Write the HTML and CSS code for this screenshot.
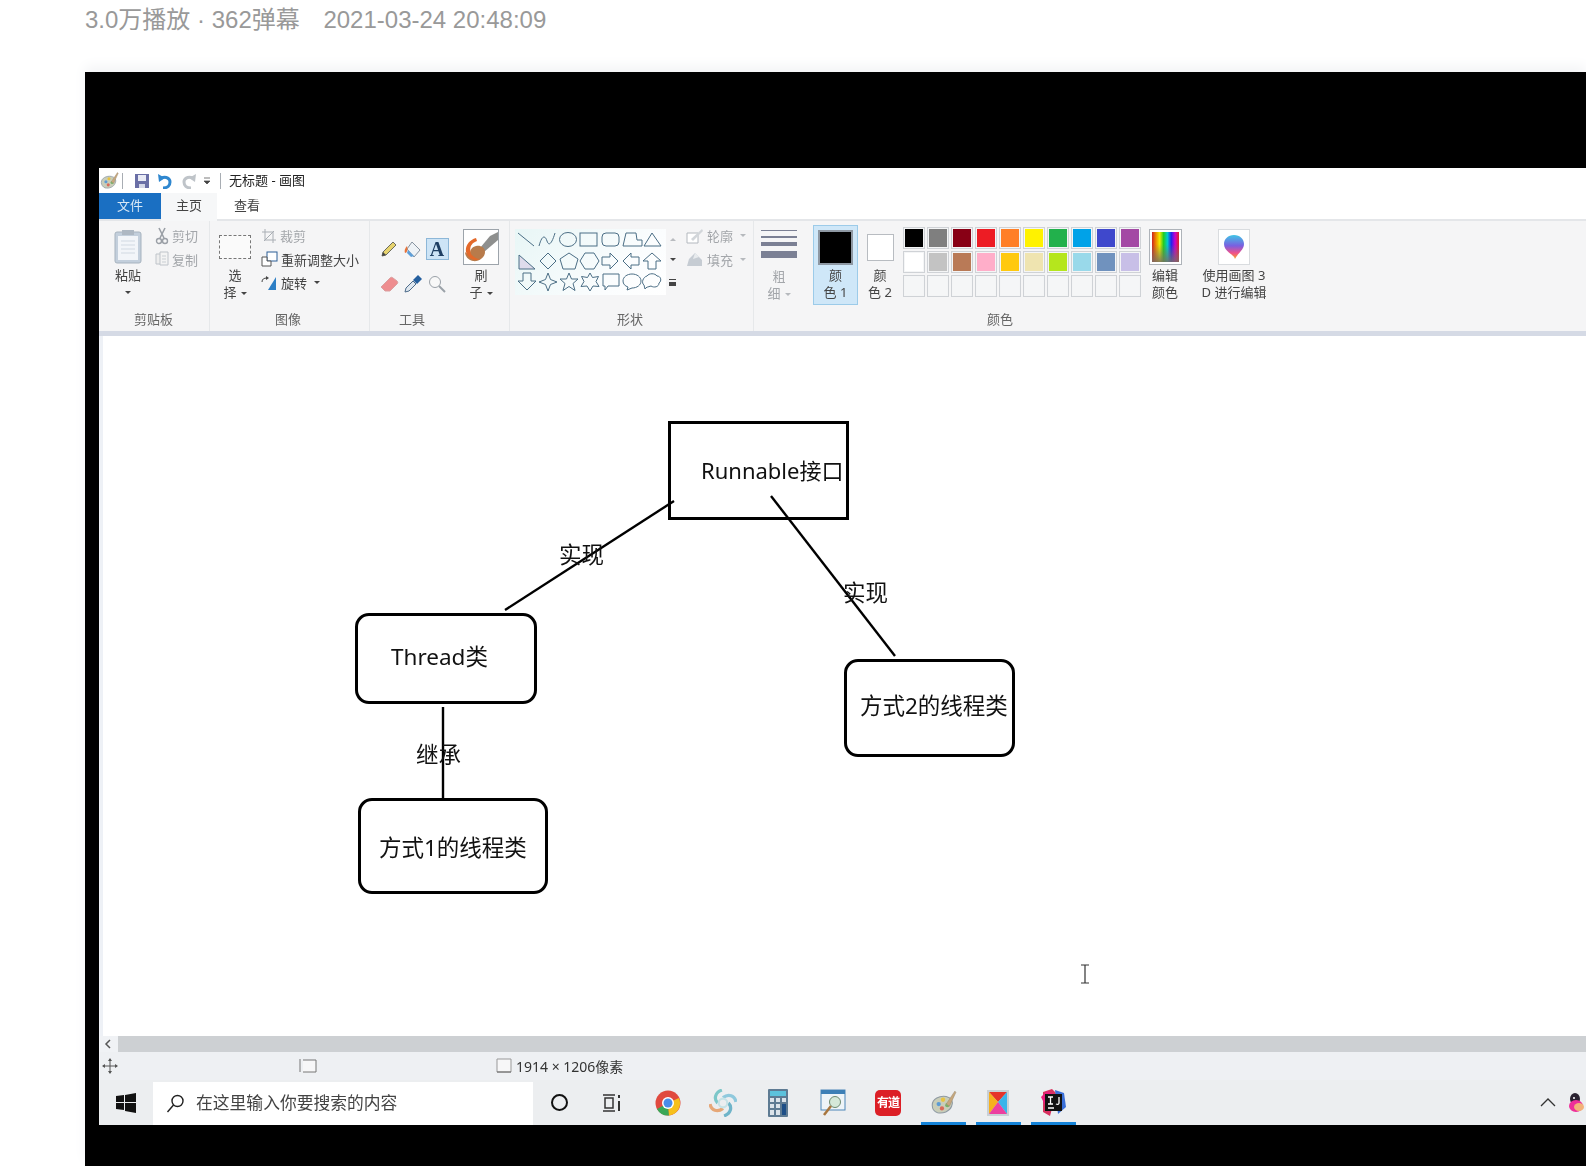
FILE: index.html
```html
<!DOCTYPE html>
<html lang="zh-CN">
<head>
    <meta charset="UTF-8">
    <title>3.0万播放 · 362弹幕</title>
    <link rel="stylesheet" href="styles.css">
</head>
<body>
    <div class="meta">3.0万播放 · 362弹幕 <span class="meta-date">2021-03-24 20:48:09</span></div>

    <div class="video">
        <div class="paint">
            <svg width="0" height="0" class="defs">
                <symbol id="palette" viewBox="0 0 26 26">
                    <path d="M3 15c0-6 7-9 13-8 5 1 7 5 5 9-2 5-8 7-13 6-3-1-5-4-5-7z" fill="#c9cdb8" stroke="#8f9aa3"/>
                    <circle cx="9" cy="14" r="2" fill="#5b9bd5"/><circle cx="13" cy="10" r="2" fill="#e8c341"/>
                    <circle cx="12" cy="18" r="2" fill="#d9695a"/><circle cx="17" cy="15" r="2" fill="#79b26a"/>
                    <path d="M16 14L24 2l1 1-6 13z" fill="#c7a77c" stroke="#9a8a70" stroke-width=".5"/>
                </symbol>
            </svg>

            <div class="titlebar">
                <svg class="qa-icon" width="20" height="20" viewBox="0 0 26 26"><use href="#palette"/></svg>
                <span class="qa-sep"></span>
                <svg class="qa-save" width="16" height="16" viewBox="0 0 16 16"><path d="M1 1h14v14H1z" fill="#6a6fa6"/><path d="M4 2h8v6H4z" fill="#e8eaf4"/><path d="M5 11h6v4H5z" fill="#d5d8e8"/></svg>
                <svg class="qa-undo" width="16" height="16" viewBox="0 0 16 16"><path d="M6 15c5 0 7-3 7-6s-3-6-9-4" fill="none" stroke="#2f87cf" stroke-width="3"/><path d="M1 1l1 8 6-4z" fill="#2f87cf"/></svg>
                <svg class="qa-redo" width="16" height="16" viewBox="0 0 16 16"><path d="M10 15c-5 0-7-3-7-6s3-6 9-4" fill="none" stroke="#bfc4c9" stroke-width="3"/><path d="M15 1l-1 8-6-4z" fill="#bfc4c9"/></svg>
                <svg class="qa-more" width="8" height="8" viewBox="0 0 8 8"><path d="M1 1h6M1 4h6L4 7z" fill="#444" stroke="#444" stroke-width=".7"/></svg>
                <span class="qa-sep qa-sep-last"></span>
                <span class="window-title">无标题 - 画图</span>
            </div>

            <div class="tabs">
                <div class="tab tab-file">文件</div>
                <div class="tab tab-active">主页</div>
                <div class="tab">查看</div>
            </div>

            <div class="ribbon">
                <div class="group group-clip">
                    <div class="group-body">
                        <div class="big-btn">
                            <svg class="big-icon" width="32" height="36" viewBox="0 0 32 36"><rect x="3" y="3" width="26" height="31" rx="2" fill="#c3cfdc" stroke="#a7b3bf"/><rect x="6" y="7" width="20" height="24" fill="#f2f5f9"/><path d="M9 12h14M9 16h14M9 20h14M9 24h14" stroke="#d1d9e2"/><rect x="10" y="1" width="12" height="5" fill="#aeb8c3"/></svg>
                            <span class="big-label">粘贴</span>
                            <span class="caret caret-row"></span>
                        </div>
                        <div class="small-col small-clip">
                            <div class="small muted">
                                <svg width="14" height="18" viewBox="0 0 14 18"><path d="M4 1l5 10M10 1L5 11" stroke="#9a9fa6" stroke-width="1.6"/><circle cx="4" cy="14" r="2.5" fill="none" stroke="#9a9fa6" stroke-width="1.4"/><circle cx="10" cy="14" r="2.5" fill="none" stroke="#9a9fa6" stroke-width="1.4"/></svg>
                                剪切
                            </div>
                            <div class="small muted">
                                <svg width="14" height="16" viewBox="0 0 14 16"><path d="M1 3h7v10H1z" fill="#eee" stroke="#bfc4ca"/><path d="M5 1h8v13H5z" fill="#f4f4f4" stroke="#bfc4ca"/><path d="M7 5h4M7 8h4M7 11h4" stroke="#c9ced3"/></svg>
                                复制
                            </div>
                        </div>
                    </div>
                    <div class="group-label label-clip">剪贴板</div>
                </div>

                <div class="group group-image">
                    <div class="group-body">
                        <div class="big-btn">
                            <span class="big-icon select-box"></span>
                            <span class="big-label">选</span>
                            <span class="big-line">择<span class="caret"></span></span>
                        </div>
                        <div class="small-col small-image">
                            <div class="small muted">
                                <svg width="16" height="16" viewBox="0 0 16 16"><path d="M4 1v11h11M1 4h11v11M3 13L13 3" fill="none" stroke="#a9aeb4"/></svg>
                                裁剪
                            </div>
                            <div class="small">
                                <svg width="17" height="16" viewBox="0 0 17 16"><rect x="6" y="1" width="10" height="9" fill="#fff" stroke="#2c5f96"/><path d="M1 6h5v4h4v5H1z" fill="#fff" stroke="#555"/></svg>
                                重新调整大小
                            </div>
                            <div class="small">
                                <svg width="17" height="16" viewBox="0 0 17 16"><path d="M7 15L15 2v13z" fill="#2d7fc5"/><path d="M1 7c0-3 2-4 5-4" fill="none" stroke="#444"/><path d="M5 1l3 2-3 2z" fill="#444"/></svg>
                                旋转<span class="caret"></span>
                            </div>
                        </div>
                    </div>
                    <div class="group-label label-image">图像</div>
                </div>

                <div class="group group-tools">
                    <div class="group-body">
                        <div class="tool-grid">
                            <svg width="18" height="18" viewBox="0 0 18 18"><path d="M2 16l1-4L13 2l3 3L6 15z" fill="#e7d36e" stroke="#6c6c5e"/><path d="M2 16l1-4 3 3z" fill="#444"/></svg>
                            <svg width="20" height="20" viewBox="0 0 20 20"><path d="M9 3l8 8-6 7-7-8z" fill="#eef2f6" stroke="#8793a0"/><path d="M5 11l6 6-3 1-4-4z" fill="#5f9fd8"/><path d="M4 7c-2 2-3 5-2 7 2 0 3-3 2-7z" fill="#e8743b"/></svg>
                            <span class="tool-active">A</span>
                            <svg width="20" height="18" viewBox="0 0 20 18"><path d="M2 12l9-9c1-1 2-1 3 0l4 3c1 1 1 2 0 3l-7 7H6z" fill="#ee8d8f" stroke="#d9a0a0"/></svg>
                            <svg width="20" height="20" viewBox="0 0 20 20"><path d="M2 18l1-4 7-7 3 3-7 7z" fill="#dfe7ef" stroke="#4d6c8b"/><path d="M10 6l5-5 4 4-5 5z" fill="#245f9e"/></svg>
                            <svg width="18" height="18" viewBox="0 0 18 18"><circle cx="7" cy="7" r="5.5" fill="#f8f8f8" stroke="#9aa1a8"/><path d="M11 11l6 6" stroke="#9aa1a8" stroke-width="2"/></svg>
                        </div>
                        <div class="big-btn brush-btn">
                            <span class="big-icon brush-box">
                                <svg width="34" height="34" viewBox="0 0 34 34"><path d="M26 6L16 18l4 4L34 10V2z" fill="#8e8f8e"/><path d="M12 16c4-1 9 1 9 6 0 6-7 10-12 9-5-1-8-5-8-9 2 2 4 2 5 1 0-3 2-6 6-7z" fill="#b87b4b"/><path d="M2 22c-1-6 3-12 10-14l1 3C7 13 5 18 7 24c2 3 6 5 9 5-6 3-12-1-14-7z" fill="#e4692a"/></svg>
                            </span>
                            <span class="big-label">刷</span>
                            <span class="big-line">子<span class="caret"></span></span>
                        </div>
                    </div>
                    <div class="group-label label-tools">工具</div>
                </div>

                <div class="group group-shapes">
                    <div class="group-body">
                        <svg class="gallery" width="151" height="66" viewBox="0 0 151 66" fill="none" stroke="#4b6e85" stroke-width="1">
                            <path d="M3 4l16 13"/>
                            <path d="M24 17c3-11 6-11 8-5s5 2 8-8"/>
                            <ellipse cx="53" cy="10.5" rx="8.5" ry="7"/>
                            <rect x="65" y="4" width="17" height="13"/>
                            <rect x="87" y="4" width="17" height="13" rx="4"/>
                            <path d="M108 17l3-13h10l1 7h5v6z"/>
                            <path d="M137 4l9 13h-17z"/>
                            <path d="M4 26v14h16z" fill="#dfdcec"/>
                            <path d="M33 24l8 8-8 8-8-8z"/>
                            <path d="M54 24l9 6-3 10H48l-3-10z"/>
                            <path d="M70 24h9l5 8-5 8h-9l-5-8z"/>
                            <path d="M87 28h8v-4l8 8-8 8v-4h-8z"/>
                            <path d="M124 28h-8v-4l-8 8 8 8v-4h8z"/>
                            <path d="M137 24l9 8h-5v8h-8v-8h-5z"/>
                            <g transform="translate(0 -2)">
                                <path d="M8 46h8v8h5l-9 9-9-9h5z"/>
                                <path d="M33 46l2.500 6.500 6.500 2.500-6.500 2.500-2.500 6.500-2.500-6.500-6.500-2.500 6.500-2.500z"/>
                                <path d="M54 46l2.500 6h6.500l-5 4.500 2 7-6-4-6 4 2-7-5-4.500h6.500z"/>
                                <path d="M75 46l2.500 4.500 6-1-2.500 5 3 5-6-.5-3 5-3-5-6 .5 3-5-2.500-5 6 1z"/>
                                <path d="M88 47h16v12h-11l-3 4v-4h-2z"/>
                                <path d="M117 47c5 0 9 3 9 7s-4 7-9 7l-5 2 1-3c-3-1-5-3-5-6 0-4 4-7 9-7z"/>
                                <path d="M132 49c2-3 8-3 10 0 4 0 5 5 2 7 0 4-5 5-8 3-3 1-5 1-6 3l-1-4c-3-2-1-8 3-9z"/>
                            </g>
                        </svg>
                        <div class="gallery-scroll">
                            <span class="scroll-up"></span>
                            <span class="scroll-down"></span>
                            <span class="scroll-more"></span>
                        </div>
                        <div class="small-col small-shape">
                            <div class="small muted">
                                <svg width="18" height="16" viewBox="0 0 18 16"><path d="M1 5h11v10H1z" fill="#fff" stroke="#b3b8be"/><path d="M5 11L16 1l1 2L7 13z" fill="#d2d6da"/></svg>
                                轮廓<span class="caret caret-muted"></span>
                            </div>
                            <div class="small muted">
                                <svg width="18" height="16" viewBox="0 0 18 16"><path d="M1 15l2-7 6-6 7 7v6z" fill="#c6ccd3"/><path d="M9 2l4 4-6 2z" fill="#e8ebee"/></svg>
                                填充<span class="caret caret-muted"></span>
                            </div>
                        </div>
                    </div>
                    <div class="group-label label-shapes">形状</div>
                </div>

                <div class="group group-colors">
                    <div class="group-body">
                        <div class="big-btn thick-btn muted">
                            <span class="big-icon thick-icon">
                                <i class="thick-1"></i><i class="thick-2"></i><i class="thick-3"></i><i class="thick-4"></i>
                            </span>
                            <span class="big-label">粗</span>
                            <span class="big-line">细<span class="caret caret-muted"></span></span>
                        </div>
                        <div class="big-btn color-active">
                            <span class="big-icon color-one"></span>
                            <span class="big-label">颜</span>
                            <span class="big-line">色 1</span>
                        </div>
                        <div class="big-btn color-second">
                            <span class="big-icon"><span class="color-two"></span></span>
                            <span class="big-label">颜</span>
                            <span class="big-line">色 2</span>
                        </div>
                        <div class="swatches">
                            <i class="sw sw-black"></i><i class="sw sw-gray"></i><i class="sw sw-maroon"></i><i class="sw sw-red"></i><i class="sw sw-orange"></i><i class="sw sw-yellow"></i><i class="sw sw-green"></i><i class="sw sw-cyan"></i><i class="sw sw-indigo"></i><i class="sw sw-purple"></i>
                            <i class="sw sw-white"></i><i class="sw sw-silver"></i><i class="sw sw-brown"></i><i class="sw sw-pink"></i><i class="sw sw-gold"></i><i class="sw sw-cream"></i><i class="sw sw-lime"></i><i class="sw sw-sky"></i><i class="sw sw-steel"></i><i class="sw sw-lilac"></i>
                            <i class="sw"></i><i class="sw"></i><i class="sw"></i><i class="sw"></i><i class="sw"></i><i class="sw"></i><i class="sw"></i><i class="sw"></i><i class="sw"></i><i class="sw"></i>
                        </div>
                        <div class="big-btn edit-btn">
                            <span class="big-icon edit-icon"><span class="rainbow"></span></span>
                            <span class="big-label">编辑</span>
                            <span class="big-line">颜色</span>
                        </div>
                        <div class="big-btn paint3d-btn">
                            <span class="big-icon paint3d-icon">
                                <svg width="22" height="26" viewBox="0 0 22 26"><defs><linearGradient id="p3d" x1="0" y1="0" x2="0" y2="1"><stop offset="0" stop-color="#3fc6e6"/><stop offset=".45" stop-color="#7a5fe0"/><stop offset=".75" stop-color="#f0518a"/><stop offset="1" stop-color="#f5a623"/></linearGradient></defs><path d="M11 1c6 0 10 4 10 9 0 6-6 9-9 15-1-5-11-7-11-15C1 5 5 1 11 1z" fill="url(#p3d)"/></svg>
                            </span>
                            <span class="big-label">使用画图 3</span>
                            <span class="big-line">D 进行编辑</span>
                        </div>
                    </div>
                    <div class="group-label colors-label">颜色</div>
                </div>
            </div>

            <div class="canvas">
                <svg class="links" width="1000" height="500" viewBox="0 0 1000 500">
                    <path d="M406 274L575 165"/>
                    <path d="M672 160L796 320"/>
                    <path d="M344 371V463"/>
                </svg>
                <div class="node node-runnable">Runnable接口</div>
                <div class="node node-round node-thread">Thread类</div>
                <div class="node node-round node-way1">方式1的线程类</div>
                <div class="node node-round node-way2">方式2的线程类</div>
                <div class="edge-label edge-a">实现</div>
                <div class="edge-label edge-b">实现</div>
                <div class="edge-label edge-c">继承</div>
                <svg class="ibeam" width="10" height="20" viewBox="0 0 10 20"><path d="M1 1h8M1 19h8M5 1v18" fill="none" stroke="#333" stroke-width="1.2"/></svg>
            </div>

            <div class="hscroll">
                <svg width="8" height="10" viewBox="0 0 8 10"><path d="M6 1L2 5l4 4" fill="none" stroke="#555" stroke-width="1.5"/></svg>
                <div class="hscroll-track"></div>
            </div>

            <div class="statusbar">
                <svg class="status-move" width="16" height="16" viewBox="0 0 16 16"><path d="M8 1v14M1 8h14" stroke="#555"/><path d="M8 0l2 3H6zM8 16l2-3H6zM0 8l3-2v4zM16 8l-3-2v4z" fill="#555"/></svg>
                <svg class="status-sel" width="18" height="16" viewBox="0 0 18 16"><path d="M1 1v13M4 2h13v12H4" fill="#f7f7f8" stroke="#777"/></svg>
                <svg class="status-size" width="16" height="16" viewBox="0 0 16 16"><path d="M1 1h14v13H1z" fill="#f7f7f8" stroke="#999"/><path d="M1 14h14" stroke="#666"/></svg>
                <span class="status-text">1914 × 1206像素</span>
            </div>

            <div class="taskbar">
                <svg class="win" width="20" height="20" viewBox="0 0 20 20"><path d="M0 3l8-1v7H0zM9 2l11-2v9H9zM0 10h8v7l-8-1zM9 10h11v10L9 18z" fill="#111"/></svg>
                <div class="search">
                    <svg width="19" height="19" viewBox="0 0 19 19"><circle cx="11.500" cy="7" r="5.500" fill="none" stroke="#222" stroke-width="1.400"/><path d="M7.500 11L1.500 18" stroke="#222" stroke-width="1.400"/></svg>
                    <span class="search-text">在这里输入你要搜索的内容</span>
                </div>
                <div class="cortana"></div>
                <svg class="taskview" width="20" height="18" viewBox="0 0 20 18"><path d="M1 1h12M1 17h12M3 4h8v10H3z" fill="none" stroke="#333" stroke-width="1.500"/><path d="M17 1v3M17 7v10" stroke="#333" stroke-width="2"/></svg>
                <div class="apps">
                    <div class="app">
                        <svg width="26" height="26" viewBox="0 0 26 26"><circle cx="13" cy="13" r="12.500" fill="#e04a3f"/><path d="M13 13L2 19a12.500 12.500 0 0 0 12 6.500z" fill="#3aa757"/><path d="M13 13l11-5a12.500 12.500 0 0 1-10 17.500z" fill="#f6c01c"/><circle cx="13" cy="13" r="6" fill="#fff"/><circle cx="13" cy="13" r="4.500" fill="#4a8de8"/></svg>
                    </div>
                    <div class="app">
                        <svg width="28" height="28" viewBox="0 0 26 26" fill="none" stroke-width="3"><path d="M8 13C4 9 6 3 12 1" stroke="#7cc7c9"/><path d="M13 8c5-4 11-2 12 4" stroke="#8fc9dd"/><path d="M18 13c4 4 2 10-4 12" stroke="#6fb4c9"/><path d="M13 18c-5 4-11 2-12-4" stroke="#e6a777"/><circle cx="13" cy="13" r="4" stroke="#c6e2e6" stroke-width="2"/></svg>
                    </div>
                    <div class="app">
                        <svg width="22" height="28" viewBox="0 0 22 28"><rect x="1" width="20" height="28" rx="1" fill="#5e7b93"/><rect x="3" y="2" width="16" height="5" fill="#5cc2dc"/><path d="M3 9h4v4H3zM9 9h4v4H9zM3 15h4v4H3zM9 15h4v4H9zM3 21h4v5H3zM9 21h4v5H9z" fill="#dbe3ea"/><path d="M15 9h4v4h-4z" fill="#dbe3ea"/><path d="M15 15h4v11h-4z" fill="#1d4e87"/></svg>
                    </div>
                    <div class="app">
                        <svg width="26" height="28" viewBox="0 0 26 28"><rect x="1" y="1" width="24" height="20" fill="#eef4f8" stroke="#4d86b8"/><rect x="1" y="1" width="24" height="4" fill="#3d7fb6"/><circle cx="15" cy="13" r="5.500" fill="#d5e8d8" stroke="#6d8a70"/><path d="M11 17l-7 9" stroke="#a8763e" stroke-width="2.500"/></svg>
                    </div>
                    <div class="app">
                        <span class="youdao">有道</span>
                    </div>
                    <div class="app app-on">
                        <svg width="28" height="28" viewBox="0 0 26 26"><use href="#palette"/></svg>
                    </div>
                    <div class="app app-on">
                        <svg width="22" height="26" viewBox="0 0 22 26"><rect width="22" height="26" fill="#c9d0d5"/><path d="M2 2h18l-9 10z" fill="#e5332a"/><path d="M2 2v22l9-12z" fill="#f6b01e"/><path d="M20 2v22l-9-12z" fill="#3ab4ea"/><path d="M2 24h18l-9-12z" fill="#ec3fa0"/></svg>
                    </div>
                    <div class="app app-on">
                        <svg width="26" height="27" viewBox="0 0 26 27"><path d="M3 3l9-3 4 4-6 23-7-4z" fill="#d7325e"/><path d="M15 1l9 3 2 14-8 7z" fill="#3a6fd8"/><path d="M1 8l6-6 8 4-6 18z" fill="#ec1d7d"/><rect x="5" y="5" width="17" height="17" fill="#111"/><path d="M8 8h5M10.500 8v7M8 15h5M19 8v6c0 1-1 2-3 1M8 19h6" fill="none" stroke="#fff" stroke-width="1.300"/></svg>
                    </div>
                </div>
                <div class="tray">
                    <svg width="16" height="9" viewBox="0 0 16 9"><path d="M1 8l7-7 7 7" fill="none" stroke="#333" stroke-width="1.300"/></svg>
                    <svg class="qq" width="18" height="22" viewBox="0 0 18 22"><ellipse cx="8" cy="7" rx="5" ry="6" fill="#2a2230"/><ellipse cx="9" cy="14" rx="7" ry="6" fill="#ee2f9a"/><ellipse cx="12" cy="15" rx="5" ry="4" fill="#f3b27a"/><circle cx="7" cy="6" r="1" fill="#fff"/></svg>
                </div>
            </div>
        </div>
    </div>
</body>
</html>
```

FILE: styles.css
```css
html, body {
    margin: 0;
    height: 1166px;
    overflow: hidden;
    background-color: #fff;
}
.meta {
    height: 72px;
    box-sizing: border-box;
    padding: 4px 0 0 85px;
    font-family: "Liberation Sans", "Noto Sans CJK SC", sans-serif;
    font-size: 24px;
    line-height: 32px;
    color: #999;
    white-space: nowrap;
}
.meta-date {
    margin-left: 17px;
}
.video {
    height: 1094px;
    margin-left: 85px;
    padding: 96px 0 0 14px;
    box-sizing: border-box;
    background-color: #000;
    box-shadow: 0 -6px 12px #f3f4f6;
    overflow: hidden;
}
.paint {
    width: 1487px;
    height: 957px;
    display: flex;
    flex-direction: column;
    background-color: #fff;
    font-family: "Noto Sans", "Noto Sans CJK SC", sans-serif;
    font-size: 13px;
    color: #444;
    filter: blur(0.4px);
    overflow: hidden;
}
.defs {
    position: absolute;
}

/* title bar */
.titlebar {
    height: 25px;
    display: flex;
    align-items: center;
    background-color: #fff;
    flex: none;
}
.qa-sep {
    width: 1px;
    height: 16px;
    margin: 0 11px 0 3px;
    background-color: #a8adb3;
}
.qa-icon {
    margin-left: 0;
}
.qa-undo {
    margin-left: 7px;
}
.qa-redo {
    margin-left: 8px;
}
.qa-more {
    margin-left: 6px;
}
.qa-sep-last {
    margin: 0 8px 0 9px;
}
.window-title {
    font-size: 13px;
    line-height: 22px;
    margin-bottom: 2px;
    color: #222;
    white-space: nowrap;
}

/* tabs */
.tabs {
    height: 28px;
    flex: none;
    display: flex;
    box-sizing: border-box;
    border-bottom: 2px solid #e4e6e9;
}
.tab {
    width: 60px;
    line-height: 25px;
    text-align: center;
    color: #444;
}
.tab-file {
    width: 62px;
    background-color: #1a6fc2;
    color: #d8e8f6;
}
.tab-active {
    width: 56px;
    margin-bottom: -2px;
    background-color: #f6f7f8;
}

/* ribbon */
.ribbon {
    height: 110px;
    flex: none;
    display: flex;
    background-color: #f5f5f6;
}
.group {
    flex: none;
    display: flex;
    flex-direction: column;
    box-sizing: border-box;
    border-right: 1px solid #e6e8ea;
}
.group-body {
    flex: 1;
    display: flex;
    box-sizing: border-box;
    padding-top: 4px;
}
.group-label {
    height: 22px;
    line-height: 20px;
    text-align: center;
    color: #666;
}
.group-clip {
    width: 111px;
    padding-left: 9px;
}
.label-clip {
    padding-right: 10px;
}
.group-image {
    width: 160px;
    padding-left: 5px;
}
.label-image {
    padding-right: 8px;
}
.group-tools {
    width: 140px;
    padding-left: 7px;
}
.label-tools {
    padding-right: 62px;
}
.group-shapes {
    width: 244px;
    padding-left: 5px;
}
.label-shapes {
    padding-right: 8px;
}
.group-colors {
    width: 532px;
    padding-left: 6px;
    border-right: none;
}
.colors-label {
    padding-right: 46px;
}
.big-btn {
    width: 40px;
    flex: none;
    display: flex;
    flex-direction: column;
    align-items: center;
    padding-top: 4px;
    line-height: 17px;
    text-align: center;
    white-space: nowrap;
}
.big-icon {
    height: 36px;
    flex: none;
    display: flex;
    align-items: center;
    justify-content: center;
}
.big-label {
    margin-top: 2px;
}
.caret {
    display: inline-block;
    width: 0;
    height: 0;
    margin-left: 4px;
    vertical-align: middle;
    border: 3px solid transparent;
    border-top: 3px solid #444;
    border-bottom: none;
}
.caret-muted {
    border-top-color: #b6b9bd;
}
.caret-row {
    margin: 7px 0 0;
}
.small-col {
    display: flex;
    flex-direction: column;
    flex: none;
    margin-top: -1px;
}
.small {
    height: 23.5px;
    display: flex;
    align-items: center;
    gap: 3px;
    white-space: nowrap;
}
.small svg {
    flex: none;
}
.muted {
    color: #a3a6aa;
}
.small-clip {
    margin-left: 7px;
}
.small-image {
    margin-left: 6px;
}
.small-shape {
    margin-left: 7px;
}
.select-box {
    width: 32px;
    height: 24px;
    margin: 6px 0;
    border: 1px dashed #777;
    background-color: #fafafa;
    box-sizing: border-box;
}
.tool-grid {
    width: 72px;
    height: 70px;
    margin-top: 6px;
    flex: none;
    display: grid;
    grid-template-columns: repeat(3, 24px);
    grid-auto-rows: 35px;
    align-items: center;
    justify-items: center;
}
.tool-active {
    width: 23px;
    height: 22px;
    line-height: 21px;
    text-align: center;
    font-family: "Liberation Serif", serif;
    font-weight: bold;
    font-size: 20px;
    color: #1f3f63;
    background-color: #cde4f6;
    border: 1px solid #8db7d8;
    box-sizing: border-box;
}
.brush-btn {
    margin-left: 12px;
}
.brush-box {
    width: 36px;
    height: 36px;
    box-sizing: border-box;
    border: 1px solid #9da4ab;
    background-color: #fff;
    overflow: hidden;
}
.gallery {
    margin-top: 4px;
    flex: none;
    background: linear-gradient(135deg, #e8f6f6, #fbfdfe 70%, #fff);
}
.gallery-scroll {
    width: 13px;
    height: 66px;
    margin-top: 4px;
    flex: none;
    display: flex;
    flex-direction: column;
    align-items: center;
    justify-content: space-around;
}
.scroll-up {
    border: 3px solid transparent;
    border-bottom: 3px solid #b9bcc0;
    border-top: none;
}
.scroll-down {
    border: 3px solid transparent;
    border-top: 3px solid #444;
    border-bottom: none;
}
.scroll-more {
    width: 7px;
    height: 2px;
    border-top: 1px solid #444;
    border-bottom: 4px solid #444;
}
.thick-btn {
    width: 38px;
}
.thick-icon {
    flex-direction: column;
    align-items: stretch;
    justify-content: flex-start;
    width: 36px;
    gap: 4.5px;
    padding-top: 1px;
}
.thick-icon i {
    display: block;
    background-color: #7b8094;
}
.thick-1 {
    height: 1px;
}
.thick-2 {
    height: 2px;
}
.thick-3 {
    height: 4px;
}
.thick-4 {
    height: 7px;
}
.color-active {
    width: 45px;
    height: 80px;
    margin: 0 0 0 15px;
    box-sizing: border-box;
    border: 1px solid #9ccbe9;
    background-color: #cfe7f8;
}
.color-one {
    width: 35px;
    height: 35px;
    box-sizing: border-box;
    border: 2px solid #8e98a3;
    background-color: #000;
}
.color-second {
    margin-left: 2px;
}
.color-two {
    display: block;
    width: 27px;
    height: 27px;
    box-sizing: border-box;
    border: 1px solid #b8bcc1;
    background-color: #fff;
}
.swatches {
    width: 240px;
    height: 72px;
    margin: 1px 0 0 2px;
    flex: none;
    display: grid;
    grid-template-columns: repeat(10, 24px);
    grid-auto-rows: 24px;
}
.sw {
    display: block;
    margin: 1px;
    background-color: #f5f6f7;
    border: 1px solid #cfd2d6;
    box-shadow: inset 0 0 0 1px #f4f5f6;
}
.sw-black { background-color: #000; }
.sw-gray { background-color: #7f7f7f; }
.sw-maroon { background-color: #880015; }
.sw-red { background-color: #ed1c24; }
.sw-orange { background-color: #ff7f27; }
.sw-yellow { background-color: #fff200; }
.sw-green { background-color: #22b14c; }
.sw-cyan { background-color: #00a2e8; }
.sw-indigo { background-color: #3f48cc; }
.sw-purple { background-color: #a349a4; }
.sw-white { background-color: #fff; }
.sw-silver { background-color: #c3c3c3; }
.sw-brown { background-color: #b97a57; }
.sw-pink { background-color: #ffaec9; }
.sw-gold { background-color: #ffc90e; }
.sw-cream { background-color: #efe4b0; }
.sw-lime { background-color: #b5e61d; }
.sw-sky { background-color: #99d9ea; }
.sw-steel { background-color: #7092be; }
.sw-lilac { background-color: #c8bfe7; }
.edit-btn {
    margin-left: 3px;
}
.edit-icon {
    width: 33px;
    box-sizing: border-box;
    border: 1px solid #aeb3b9;
    background-color: #fff;
    padding: 2px;
}
.rainbow {
    display: block;
    width: 100%;
    height: 100%;
    background:
        linear-gradient(to bottom, rgba(255, 255, 255, 0) 40%, rgba(120, 110, 100, 0.85)),
        linear-gradient(to right, #c22, #e80, #ee0, #2c2, #0cc, #22e, #c0c, #d22);
}
.paint3d-btn {
    width: 90px;
    margin-left: 4px;
}
.paint3d-icon {
    width: 32px;
    box-sizing: border-box;
    border: 1px solid #d9dcdf;
    background-color: #fff;
}

/* canvas */
.canvas {
    position: relative;
    flex: 1;
    box-sizing: border-box;
    background-color: #fff;
    box-shadow: inset 4px 0 #eef1f6;
    overflow: hidden;
}
.paint .canvas {
    border-top: 5px solid #d5dae5;
}
.links {
    position: absolute;
    left: 0;
    top: 0;
}
.links path {
    fill: none;
    stroke: #000;
    stroke-width: 2.4;
}
.node {
    position: absolute;
    box-sizing: border-box;
    border: 3px solid #000;
    font-size: 22.5px;
    line-height: 30px;
    color: #111;
    white-space: nowrap;
}
.node-round {
    border-radius: 14px;
}
.node-runnable {
    left: 569px;
    top: 85px;
    width: 181px;
    height: 99px;
    padding: 31px 0 0 30px;
    font-size: 22px;
}
.node-thread {
    left: 256px;
    top: 277px;
    width: 182px;
    height: 91px;
    padding: 26px 0 0 33px;
}
.node-way1 {
    left: 259px;
    top: 462px;
    width: 190px;
    height: 96px;
    padding: 32px 0 0 18px;
}
.node-way2 {
    left: 745px;
    top: 323px;
    width: 171px;
    height: 98px;
    padding: 29px 0 0 13px;
}
.edge-label {
    position: absolute;
    font-size: 22.5px;
    line-height: 30px;
    color: #111;
}
.edge-a {
    left: 460px;
    top: 204px;
}
.edge-b {
    left: 744px;
    top: 242px;
}
.edge-c {
    left: 317px;
    top: 404px;
}
.ibeam {
    position: absolute;
    left: 981px;
    top: 628px;
}

/* bottom bars */
.hscroll {
    height: 16px;
    flex: none;
    display: flex;
    align-items: center;
    padding-left: 5px;
    gap: 6px;
    background-color: #f0f2f5;
}
.hscroll-track {
    flex: 1;
    height: 16px;
    background-color: #cdd0d3;
}
.statusbar {
    height: 28px;
    flex: none;
    display: flex;
    align-items: center;
    padding-left: 3px;
    background-color: #eef0f3;
}
.status-sel {
    margin-left: 181px;
}
.status-size {
    margin-left: 179px;
}
.status-text {
    margin-left: 4px;
    font-size: 14px;
    color: #333;
}
.taskbar {
    height: 45px;
    flex: none;
    display: flex;
    align-items: center;
    background-color: #eceef0;
}
.win {
    margin-left: 17px;
    flex: none;
}
.search {
    width: 380px;
    height: 43px;
    margin: 2px 0 0 17px;
    padding-left: 13px;
    display: flex;
    align-items: center;
    gap: 11px;
    flex: none;
    box-sizing: border-box;
    background-color: #fff;
    color: #444;
    white-space: nowrap;
}
.search-text {
    margin-bottom: 3px;
    font-size: 16.8px;
}
.cortana {
    width: 17px;
    height: 17px;
    margin-left: 18px;
    flex: none;
    box-sizing: border-box;
    border: 2.5px solid #111;
    border-radius: 50%;
}
.taskview {
    margin-left: 34px;
    flex: none;
}
.apps {
    margin-left: 18.5px;
    height: 45px;
    display: flex;
    flex: none;
}
.app {
    width: 55px;
    height: 45px;
    box-sizing: border-box;
    display: flex;
    align-items: center;
    justify-content: center;
}
.app-on {
    width: 45px;
    margin: 0 5px;
    border-bottom: 3px solid #1483d8;
    padding-top: 3px;
}
.youdao {
    width: 26px;
    height: 26px;
    border-radius: 5px;
    background-color: #dc1f26;
    color: #fff;
    font-size: 12px;
    font-weight: bold;
    line-height: 26px;
    text-align: center;
    white-space: nowrap;
    overflow: hidden;
    letter-spacing: -1px;
}
.tray {
    margin-left: 459px;
    display: flex;
    align-items: center;
    gap: 11px;
    flex: none;
}
```
